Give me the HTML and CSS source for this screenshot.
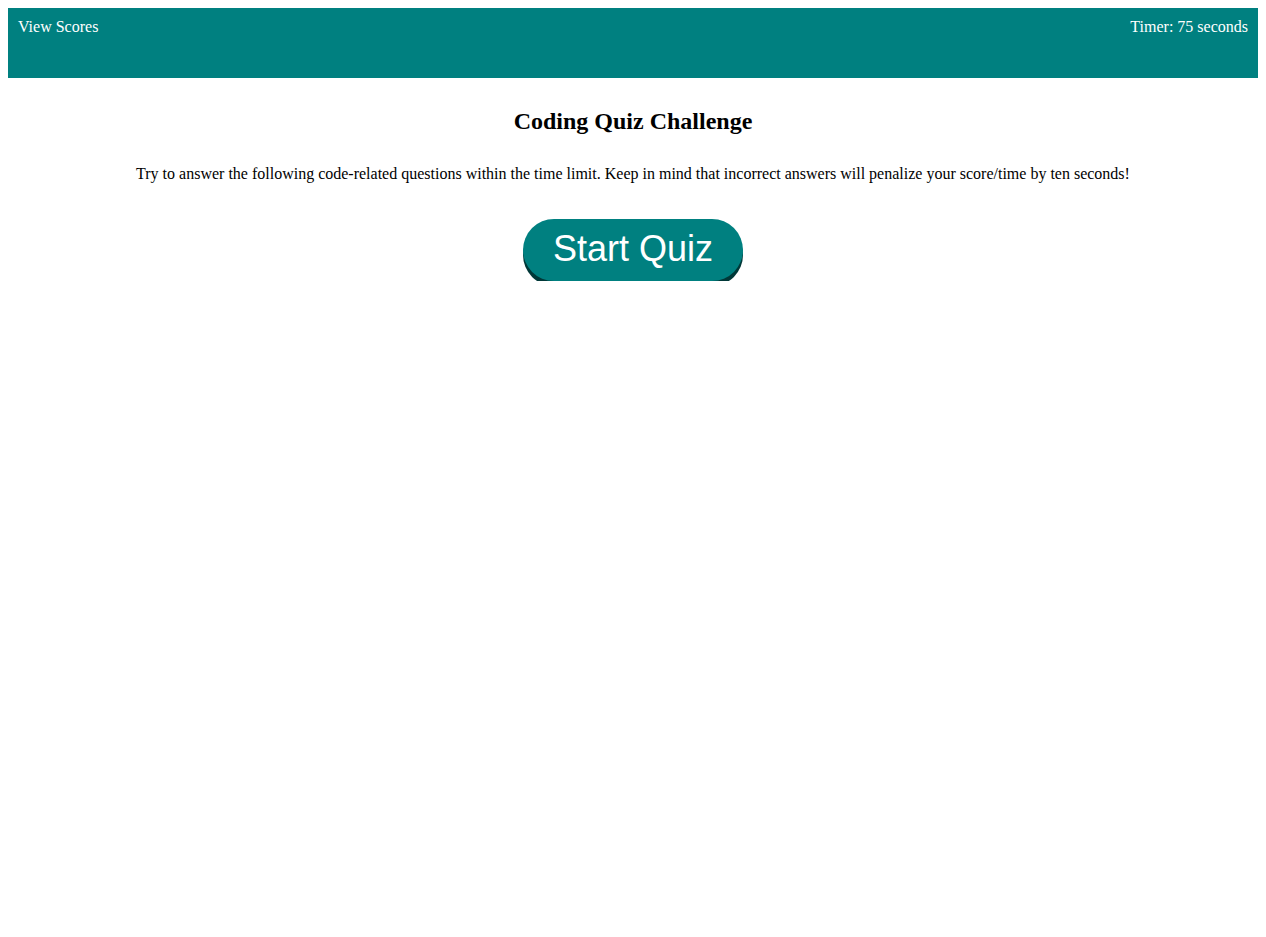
FILE: index.html
```html
<!DOCTYPE html>
<html>
<head>
<meta charset="utf-8">
<link rel="stylesheet" href="styles.css">
</head>
<body>
<header class="topbar">
  <a class="scores">View Scores</a>
  <span class="timer">Timer: 75 seconds</span>
</header>
<main class="intro">
  <h2 class="title">Coding Quiz Challenge</h2>
  <p class="desc">Try to answer the following code-related questions within the time limit. Keep in mind that incorrect answers will penalize your score/time by ten seconds!</p>
  <button class="start">Start Quiz</button>
</main>
</body>
</html>
```
FILE: styles.css
```css
body {
  margin: 8px;
  font-family: "Liberation Serif", "Times New Roman", serif;
  font-size: 16px;
  color: #000;
  background: #fff;
}
.topbar {
  background: #008080;
  color: #fff;
  height: 70px;
  box-sizing: border-box;
  padding: 10px;
  display: flex;
  justify-content: space-between;
  align-items: flex-start;
}
.scores, .timer {
  color: #fff;
  line-height: 18px;
}
.intro {
  display: flex;
  flex-direction: column;
  align-items: center;
  text-align: center;
  padding-top: 30px;
}
.title {
  font-size: 24px;
  font-weight: bold;
  margin: 0;
  line-height: 27px;
}
.desc {
  margin: 30px 0 0;
  line-height: 18px;
}
.start {
  margin-top: 36px;
  width: 220px;
  height: 62px;
  border: none;
  border-radius: 31px;
  background: #008080;
  color: #fff;
  font-family: "Liberation Sans", Arial, sans-serif;
  font-size: 36px;
  line-height: 40px;
  box-shadow: 0 5px 0 #003838;
  padding: 0 0 2px;
}
```
